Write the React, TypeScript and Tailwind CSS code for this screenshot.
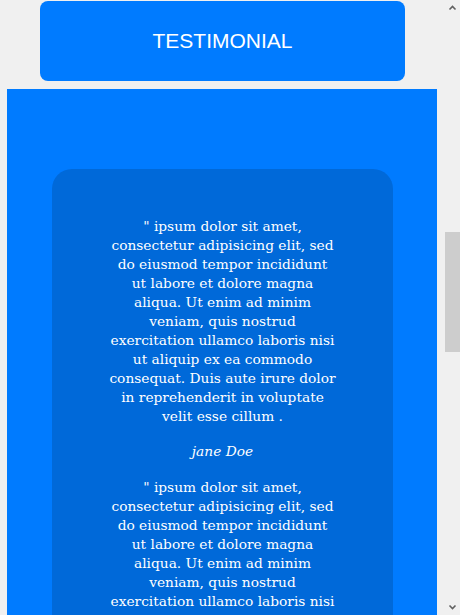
import React from "react";

const quoteLines = [
  '" ipsum dolor sit amet,',
  "consectetur adipisicing elit, sed",
  "do eiusmod tempor incididunt",
  "ut labore et dolore magna",
  "aliqua. Ut enim ad minim",
  "veniam, quis nostrud",
  "exercitation ullamco laboris nisi",
  "ut aliquip ex ea commodo",
  "consequat. Duis aute irure dolor",
  "in reprehenderit in voluptate",
  "velit esse cillum .",
];

function Testimonial() {
  return (
    <div className="mb-[17px]">
      <p className="mb-[16px] whitespace-nowrap">
        {quoteLines.map((line, i) => (
          <React.Fragment key={i}>
            {line}
            {i < quoteLines.length - 1 && <br />}
          </React.Fragment>
        ))}
      </p>
      <p className="italic">jane Doe</p>
    </div>
  );
}

export default function App() {
  return (
    <div className="flex h-[615px] w-[460px] overflow-hidden bg-[#f0f0f0]">
      <main className="flex w-[445px] flex-col overflow-hidden">
        <div className="flex justify-center pt-px">
          <button
            type="button"
            className="flex h-[80px] w-[365px] shrink-0 items-center justify-center rounded-lg bg-[#007bff] text-[21px] text-white font-['Liberation_Sans',Arial,sans-serif]"
          >
            TESTIMONIAL
          </button>
        </div>
        <section className="ml-[7px] mt-[8px] w-[430px] shrink-0 bg-[#007bff] pl-[45px] pr-[44px] pt-[80px]">
          <div className="rounded-t-[20px] bg-[#0069d9] px-[40px] pt-[48px] text-center text-[13.75px] leading-[19px] text-white font-['DejaVu_Serif',Georgia,serif]">
            <Testimonial />
            <Testimonial />
          </div>
        </section>
      </main>
      <div className="flex w-[15px] flex-col items-center bg-[#f0f0f0]">
        <svg width="9" height="15" viewBox="0 0 9 15" className="shrink-0">
          <path d="M1.5 9.5 L4.5 6.5 L7.5 9.5" fill="none" stroke="#606060" strokeWidth="1.6" />
        </svg>
        <div className="mt-[217px] h-[120px] w-full shrink-0 bg-[#cdcdcd]" />
        <div className="flex-1" />
        <svg width="9" height="15" viewBox="0 0 9 15" className="shrink-0">
          <path d="M1.5 5.5 L4.5 8.5 L7.5 5.5" fill="none" stroke="#606060" strokeWidth="1.6" />
        </svg>
      </div>
    </div>
  );
}
